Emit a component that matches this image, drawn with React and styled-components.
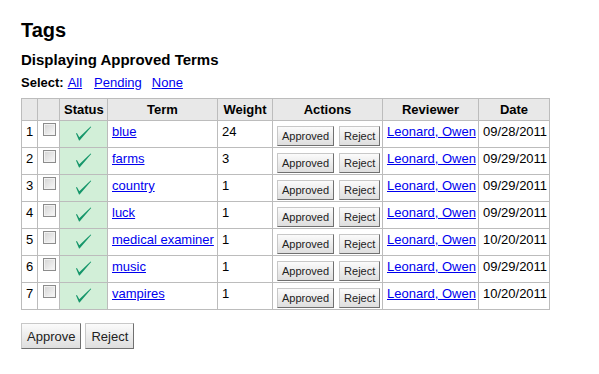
import React from 'react'
import styled, { createGlobalStyle } from "styled-components";

const GlobalStyle = createGlobalStyle`
  body {
    margin: 0;
    background: #fff;
    font-family: "Liberation Sans", Arial, sans-serif;
    color: #000;
  }
`;

const Page = styled.div`
  padding: 19px 21px 0;
`;

const Title = styled.h1`
  margin: 0;
  font-size: 20px;
  line-height: 23px;
  font-weight: bold;
`;

const SubTitle = styled.h2`
  margin: 9px 0 0;
  font-size: 15px;
  line-height: 17px;
  font-weight: bold;
`;

const SelectBar = styled.div`
  margin-top: 7px;
  font-size: 13px;
  line-height: 15px;
  display: flex;
`;

const SelectLabel = styled.span`
  font-weight: bold;
  margin-right: 4px;
`;

const TextLink = styled.a`
  color: #0000ee;
  text-decoration: underline;
  cursor: pointer;
  margin-right: ${(p) => p.$gap || 0}px;
`;

const Table = styled.table`
  margin-top: 8px;
  border-collapse: collapse;
  table-layout: fixed;
  width: 528px;
  font-size: 13px;
  line-height: 15px;
`;

const Th = styled.th`
  background: #e8e8e8;
  border: 1px solid #bcbcbc;
  padding: 3px 4px 3px;
  font-weight: bold;
  text-align: center;
  white-space: nowrap;
`;

const Row = styled.tr`
  height: 27px;
`;

const Td = styled.td`
  border: 1px solid #bcbcbc;
  padding: 3px 4px 0;
  vertical-align: top;
  white-space: nowrap;
  background: ${(p) => (p.$status ? "#d2efd8" : "#fff")};
  text-align: ${(p) => (p.$status ? "center" : "left")};
`;

const Check = styled.input.attrs({ type: "checkbox" })`
  appearance: none;
  display: block;
  width: 13px;
  height: 13px;
  margin: -1px 0 0 1px;
  border: 1px solid #8c8c8c;
  box-sizing: border-box;
  background: linear-gradient(135deg, #d4d4d4 0%, #eeeeee 70%, #fafafa 100%);
  box-shadow: inset 0 0 0 1px #f2f2f2;
`;

const CheckMark = styled.svg`
  display: block;
  margin: 2px auto 0;
`;

const Button = styled.button`
  font-family: "Liberation Sans", Arial, sans-serif;
  font-size: ${(p) => (p.$small ? 11 : 13)}px;
  height: ${(p) => (p.$small ? 20 : 26)}px;
  padding: 0 ${(p) => (p.$small ? 4 : 5)}px;
  color: #222;
  background: linear-gradient(#fbfbfb, #dedede);
  border: 1px solid;
  border-color: #c8c8c8 #707070 #707070 #c8c8c8;
  border-radius: 0;
  cursor: pointer;
`;

const Actions = styled.div`
  display: flex;
  gap: 5px;
  margin-top: 2px;
`;

const Footer = styled.div`
  display: flex;
  gap: 4px;
  margin-top: 13px;
`;

const rows = [
  { term: "blue", weight: 24, date: "09/28/2011" },
  { term: "farms", weight: 3, date: "09/29/2011" },
  { term: "country", weight: 1, date: "09/29/2011" },
  { term: "luck", weight: 1, date: "09/29/2011" },
  { term: "medical examiner", weight: 1, date: "10/20/2011" },
  { term: "music", weight: 1, date: "09/29/2011" },
  { term: "vampires", weight: 1, date: "10/20/2011" },
];

const Approved = () => (
  <CheckMark width="17" height="15" viewBox="0 0 17 15">
    <path d="M1 7.6 L1.9 7 L4.3 11.3 L15.6 0.5 L16.2 1.1 L4.6 14.4 L4 14.4 Z" fill="#15966a" />
  </CheckMark>
);

const App = () => {
  return (
    <>
      <GlobalStyle />
      <Page>
        <Title>Tags</Title>
        <SubTitle>Displaying Approved Terms</SubTitle>
        <SelectBar>
          <SelectLabel>Select:</SelectLabel>
          <TextLink $gap={12}>All</TextLink>
          <TextLink $gap={10}>Pending</TextLink>
          <TextLink>None</TextLink>
        </SelectBar>
        <Table>
          <colgroup>
            <col style={{ width: 16 }} />
            <col style={{ width: 22 }} />
            <col style={{ width: 48 }} />
            <col style={{ width: 110 }} />
            <col style={{ width: 55 }} />
            <col style={{ width: 110 }} />
            <col style={{ width: 96 }} />
            <col style={{ width: 71 }} />
          </colgroup>
          <thead>
            <tr>
              <Th></Th>
              <Th></Th>
              <Th>Status</Th>
              <Th>Term</Th>
              <Th>Weight</Th>
              <Th>Actions</Th>
              <Th>Reviewer</Th>
              <Th>Date</Th>
            </tr>
          </thead>
          <tbody>
            {rows.map((r, i) => (
              <Row key={r.term}>
                <Td>{i + 1}</Td>
                <Td><Check /></Td>
                <Td $status><Approved /></Td>
                <Td><TextLink>{r.term}</TextLink></Td>
                <Td>{r.weight}</Td>
                <Td>
                  <Actions>
                    <Button $small>Approved</Button>
                    <Button $small>Reject</Button>
                  </Actions>
                </Td>
                <Td><TextLink>Leonard, Owen</TextLink></Td>
                <Td>{r.date}</Td>
              </Row>
            ))}
          </tbody>
        </Table>
        <Footer>
          <Button>Approve</Button>
          <Button>Reject</Button>
        </Footer>
      </Page>
    </>
  )
}

export default App
